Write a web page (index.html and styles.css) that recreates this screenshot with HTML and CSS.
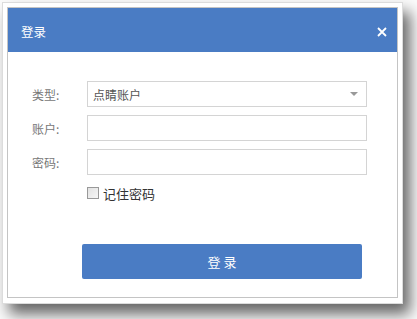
FILE: index.html
```html
<!DOCTYPE html>
<html lang="zh">
<head>
<meta charset="utf-8">
<title>登录</title>
<link rel="stylesheet" href="styles.css">
</head>
<body>
<div class="frame">
  <div class="dialog">
    <div class="header">
      <span class="title">登录</span>
      <span class="close">
        <svg width="10" height="10" viewBox="0 0 10 10"><path d="M1 1 L9 9 M9 1 L1 9" stroke="#fff" stroke-width="1.8" fill="none"/></svg>
      </span>
    </div>
    <div class="body">
      <div class="row">
        <label class="label">类型:</label>
        <div class="field select">
          <span class="value">点睛账户</span>
          <span class="arrow"></span>
        </div>
      </div>
      <div class="row">
        <label class="label">账户:</label>
        <div class="field"></div>
      </div>
      <div class="row">
        <label class="label">密码:</label>
        <div class="field"></div>
      </div>
      <div class="remember">
        <span class="check"></span>
        <span class="remember-text">记住密码</span>
      </div>
      <div class="button">登 录</div>
    </div>
  </div>
</div>
</body>
</html>
```
FILE: styles.css
```css
html, body {
  margin: 0;
  padding: 0;
}
body {
  background: #fbfbfb;
  padding: 2px;
  width: 417px;
  height: 319px;
  box-sizing: border-box;
  overflow: hidden;
  font-family: "Noto Sans CJK SC", "Noto Sans", sans-serif;
}
.frame {
  width: 401px;
  box-sizing: border-box;
  background: #fff;
  border: 1px solid #dcdcdc;
  padding: 4px 4px 5px 4px;
  box-shadow: 7px 10px 14px rgba(0, 0, 0, 0.6);
}
.dialog {
  border: 1px solid #c4c4c4;
  background: #fff;
}
.header {
  height: 44px;
  background: #4a7cc4;
  display: flex;
  align-items: center;
  justify-content: space-between;
  padding: 3px 10px 0 13px;
  box-sizing: border-box;
}
.title {
  color: #fff;
  font-size: 12.5px;
}
.close {
  display: flex;
  align-items: center;
}
.body {
  padding: 29px 0 18px 0;
}
.row {
  display: flex;
  align-items: center;
  margin-bottom: 8px;
  height: 26px;
}
.label {
  width: 55px;
  padding-left: 24px;
  box-sizing: content-box;
  font-size: 12px;
  color: #777;
}
.field {
  width: 280px;
  height: 26px;
  box-sizing: border-box;
  border: 1px solid #d4d4d4;
  background: #fff;
}
.select {
  display: flex;
  align-items: center;
  justify-content: space-between;
  padding: 0 8px 0 5px;
}
.value {
  font-size: 12px;
  color: #555;
}
.arrow {
  width: 0;
  height: 0;
  border-left: 4px solid transparent;
  border-right: 4px solid transparent;
  border-top: 4px solid #999;
}
.remember {
  display: flex;
  align-items: center;
  margin-left: 79px;
  margin-top: 11px;
  height: 14px;
}
.check {
  width: 12px;
  height: 12px;
  box-sizing: border-box;
  border: 1px solid #999;
  background: linear-gradient(135deg, #e2e2e2, #f6f6f6);
  margin-right: 4px;
}
.remember-text {
  font-size: 13px;
  color: #333;
}
.button {
  margin: 44px 0 0 74px;
  width: 280px;
  height: 35px;
  background: #4a7cc4;
  border-radius: 2px;
  color: #fff;
  font-size: 13px;
  display: flex;
  align-items: center;
  justify-content: center;
}
```
